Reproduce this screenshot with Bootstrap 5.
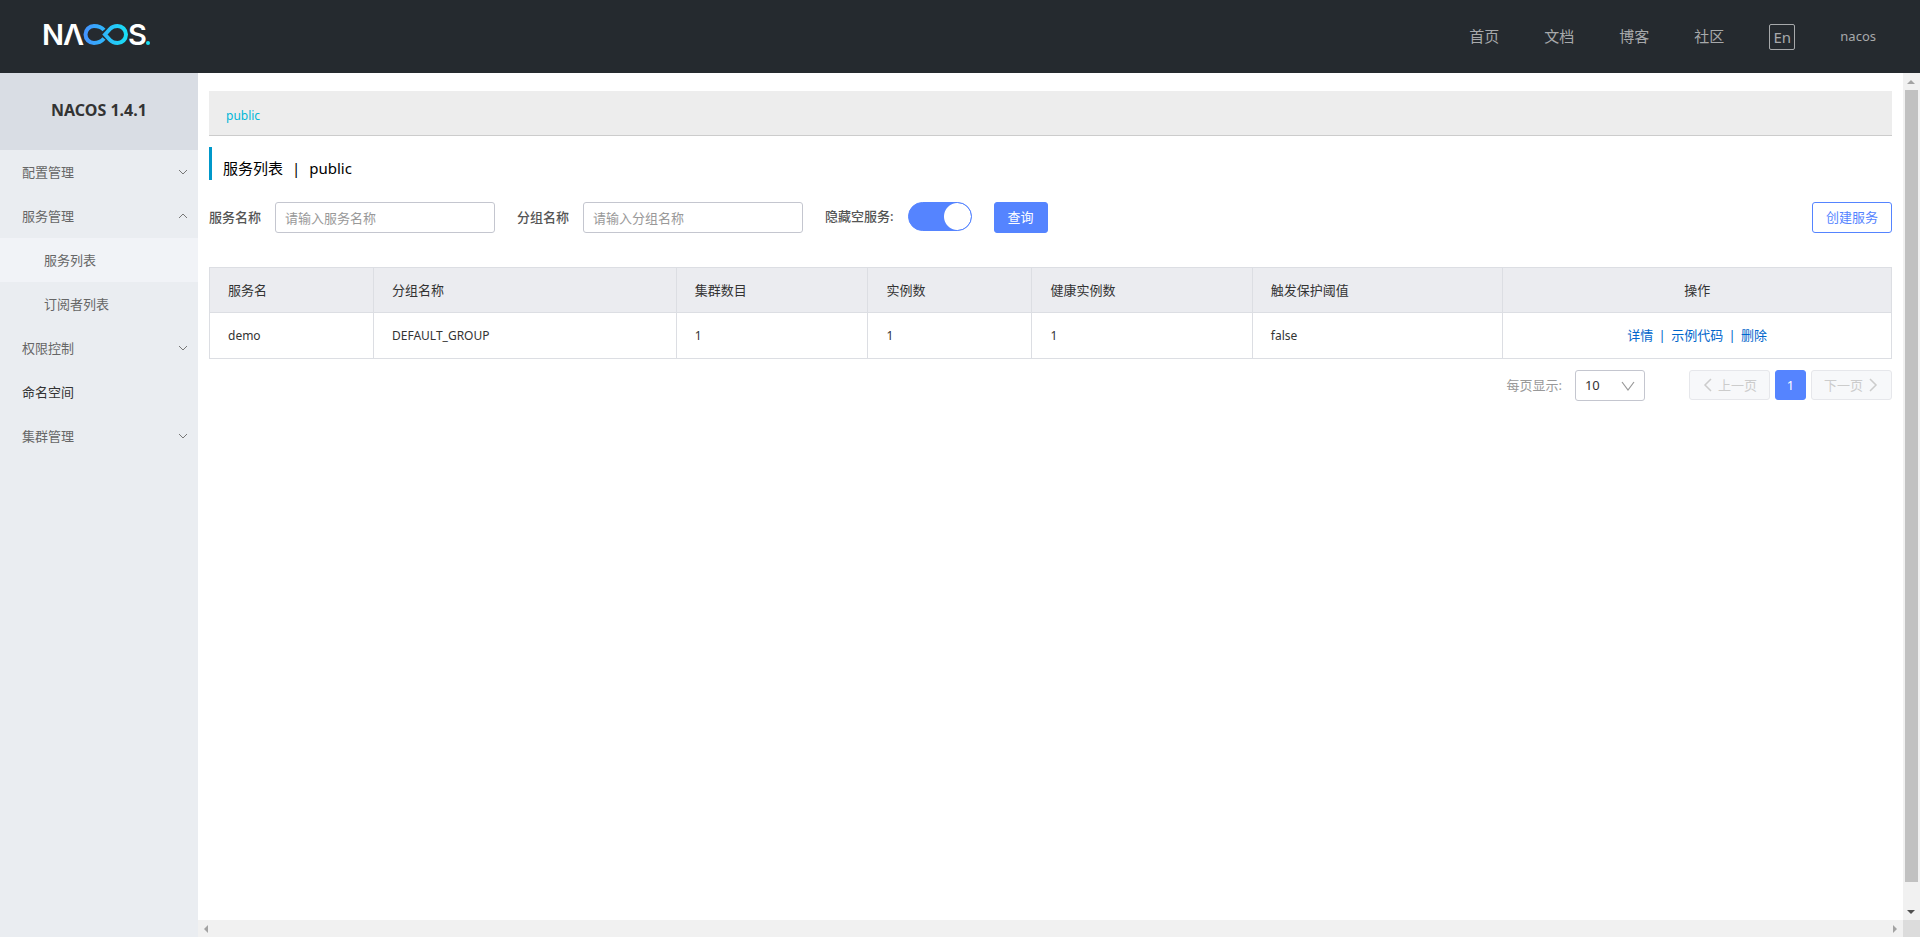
<!DOCTYPE html>
<html lang="zh-CN">
<head>
<meta charset="utf-8">
<meta name="viewport" content="width=device-width, initial-scale=1">
<title>Nacos</title>
<link href="https://cdn.jsdelivr.net/npm/bootstrap@5.3.0/dist/css/bootstrap.min.css" rel="stylesheet">
<style>
body{font-family:"Noto Sans","Noto Sans CJK SC",sans-serif;font-size:13px;line-height:20px;color:#333;background:#fff}
a{text-decoration:none}
.topbar{height:73px;background:#252a2f;padding:0 44px 0 40px}
.topnav{gap:45px;font-size:15px}
.topnav a{color:#a7a9ab;padding-bottom:2px}
.topnav .user-link{font-size:13px}
.lang-btn{width:26px;height:26px;padding:0;border:1px solid #a7a9ab;border-radius:2px;background:none;color:#a7a9ab;font-size:15px;line-height:22px}
.sidebar{width:198px;background:#eaedf1}
.side-title{height:77px;background:#d9dde4;font-size:16px;font-weight:700;margin:0;padding-bottom:2px}
.side-menu a{height:44px;padding:0 10px 0 22px;color:#666}
.side-menu .sub-link{padding-left:44px}
.side-menu .active{background:#f1f3f7}
.side-menu .plain-link{color:#333}
.content-pane{padding:18px 11px}
.ns-bar{height:45px;background:#ededed;border-bottom:1px solid #ccc;padding:5px 17px 0}
.ns-bar a{color:#00b7d8;font-size:12px}
.page-title{margin:11px 0 22px;height:33px;padding:8px 0 0 11px;border-left:3px solid #0098ca;font-size:15px;font-weight:400;color:#000}
.title-bar{padding:0 9px}
.query-form{gap:22px}
.query-form label{font-weight:500;color:#555;margin-right:14px;padding-bottom:2px}
.query-form .form-control{width:220px;height:31px;padding:0 9px;border:1px solid #c4c6cf;border-radius:3px;font-size:13px}
.query-form .form-control::placeholder{color:#999}
.form-switch .form-check-input{width:64px;height:29px;margin:0;border:1px solid #5584ff;background-color:#5584ff;background-image:radial-gradient(circle at center,#fff 13px,transparent 14px);background-size:27px 27px;background-position:right center}
.btn-nc{height:31px;padding:0 13px 2px;font-size:13px;border-radius:3px;line-height:20px}
.btn-main{background:#5584ff;border-color:#5584ff;color:#fff}
.btn-line{background:#fff;border-color:#5584ff;color:#5584ff}
.svc-table{margin:34px 0 11px;table-layout:fixed;border-color:#dcdee3;--bs-table-color:#333}
.svc-table th,.svc-table td{height:46px;padding:0 18px;vertical-align:middle;font-weight:400;color:#333}
.svc-table thead th{background:#ebecf0;height:45px}
.svc-table td{font-size:12px}
.svc-table .ops-cell{font-size:13px;color:#06c;padding-bottom:2px}
.svc-table .ops-cell a{color:#06c}
.ops-bar{padding:0 2px}
.size-label{color:#999;margin-right:13px;padding-bottom:2px}
.size-select{width:70px;height:31px;padding:0 9px;border:1px solid #c4c6cf;border-radius:3px;font-size:13px;color:#333;background-size:14px 14px;background-position:right 9px center;background-image:url("data:image/svg+xml,%3csvg xmlns='http://www.w3.org/2000/svg' viewBox='0 0 14 14'%3e%3cpath d='M1 3l6 8 6-8' fill='none' stroke='%23999' stroke-width='1.2'/%3e%3c/svg%3e")}
.pager{gap:5px;margin-left:44px}
.pager .btn{height:30px;padding:0 12px;font-size:13px;border-radius:3px;line-height:20px}
.pager .btn:disabled{background:#f7f8fa;border-color:#e6e7eb;color:#ccc;opacity:1}
.pager .btn-main{width:31px;padding:0}
.v-rail{width:17px;background:#f1f1f1;padding:0 2px}
.v-thumb{background:#c1c1c1;margin-bottom:21px}
.rail-tip{height:17px}
.h-rail{height:17px;background:#f1f1f1}
.rail-corner{width:17px;background:#dcdcdc}
</style>
</head>
<body class="vh-100 d-flex flex-column overflow-hidden">
<header class="topbar d-flex align-items-center justify-content-between flex-shrink-0">
  <a href="#" aria-label="NACOS">
    <svg class="d-block" width="112" height="41" viewBox="-4 0 112 41">
      <defs><linearGradient id="loop" gradientUnits="userSpaceOnUse" x1="39" x2="84" y1="0" y2="0"><stop offset="0" stop-color="#4590ff"/><stop offset="1" stop-color="#17e0f5"/></linearGradient></defs>
      <g fill="#fff" font-family="Inter" font-size="29" font-weight="600"><text x="-2" y="29">N</text><text x="19" y="29">Λ</text><text x="84" y="29">S</text></g>
      <g fill="none" stroke="url(#loop)" stroke-width="4"><path d="M60 14C57 10.500 54 10 50 10A8.500 8.500 0 1 0 50 27C54 27 57 26 60 22.500"/><path d="M61 18.500L66 13C68 10.800 70.500 10 73.500 10A8.500 8.500 0 1 1 73.500 27C70.500 27 68 26.200 66 24Z"/></g>
      <circle cx="104" cy="27" r="2" fill="#17e0f5"/>
    </svg>
  </a>
  <nav class="topnav d-flex align-items-center">
    <a href="#">首页</a><a href="#">文档</a><a href="#">博客</a><a href="#">社区</a>
    <button type="button" class="lang-btn">En</button>
    <a href="#" class="user-link">nacos</a>
  </nav>
</header>
<div class="d-flex flex-grow-1">
  <aside class="sidebar flex-shrink-0">
    <h1 class="side-title d-flex align-items-center justify-content-center">NACOS 1.4.1</h1>
    <nav class="side-menu d-flex flex-column">
      <a href="#" class="d-flex align-items-center justify-content-between">配置管理<svg width="10" height="8" fill="none" stroke="#777"><path d="M1 2l4 4 4-4"/></svg></a>
      <a href="#" class="d-flex align-items-center justify-content-between">服务管理<svg width="10" height="8" fill="none" stroke="#777"><path d="M1 6l4-4 4 4"/></svg></a>
      <a href="#" class="sub-link active d-flex align-items-center">服务列表</a>
      <a href="#" class="sub-link d-flex align-items-center">订阅者列表</a>
      <a href="#" class="d-flex align-items-center justify-content-between">权限控制<svg width="10" height="8" fill="none" stroke="#777"><path d="M1 2l4 4 4-4"/></svg></a>
      <a href="#" class="plain-link d-flex align-items-center">命名空间</a>
      <a href="#" class="d-flex align-items-center justify-content-between">集群管理<svg width="10" height="8" fill="none" stroke="#777"><path d="M1 2l4 4 4-4"/></svg></a>
    </nav>
  </aside>
  <div class="d-flex flex-column flex-grow-1">
    <div class="d-flex flex-grow-1">
      <main class="content-pane flex-grow-1">
        <div class="ns-bar d-flex align-items-center"><a href="#">public</a></div>
        <h2 class="page-title d-flex align-items-center"><span>服务列表</span><span class="title-bar">|</span><span>public</span></h2>
        <form class="query-form d-flex align-items-start">
          <div class="d-flex align-items-center"><label for="svc">服务名称</label><input id="svc" type="text" class="form-control" placeholder="请输入服务名称"></div>
          <div class="d-flex align-items-center"><label for="grp">分组名称</label><input id="grp" type="text" class="form-control" placeholder="请输入分组名称"></div>
          <div class="form-switch d-flex align-items-center p-0"><label for="hide">隐藏空服务:</label><input id="hide" type="checkbox" role="switch" class="form-check-input" checked></div>
          <button type="button" class="btn btn-nc btn-main">查询</button>
          <button type="button" class="btn btn-nc btn-line ms-auto">创建服务</button>
        </form>
        <table class="svc-table table table-bordered">
          <colgroup><col style="width:9.75%"><col style="width:18%"><col style="width:11.4%"><col style="width:9.75%"><col style="width:13.1%"><col style="width:14.9%"><col></colgroup>
          <thead><tr><th>服务名</th><th>分组名称</th><th>集群数目</th><th>实例数</th><th>健康实例数</th><th>触发保护阈值</th><th class="text-center">操作</th></tr></thead>
          <tbody><tr><td>demo</td><td>DEFAULT_GROUP</td><td>1</td><td>1</td><td>1</td><td>false</td><td class="ops-cell text-center"><a href="#">详情</a><span class="ops-bar"> | </span><a href="#">示例代码</a><span class="ops-bar"> | </span><a href="#">删除</a></td></tr></tbody>
        </table>
        <div class="d-flex align-items-start justify-content-end">
          <div class="d-flex align-items-center"><label class="size-label" for="size">每页显示:</label><select id="size" class="form-select size-select"><option>10</option></select></div>
          <nav class="pager d-flex" aria-label="分页">
            <button type="button" class="btn d-flex align-items-center gap-1" disabled><svg width="12" height="14" fill="none" stroke="currentColor" stroke-width="1.500"><path d="M9 1L3 7l6 6"/></svg>上一页</button>
            <button type="button" class="btn btn-main">1</button>
            <button type="button" class="btn d-flex align-items-center gap-1" disabled>下一页<svg width="12" height="14" fill="none" stroke="currentColor" stroke-width="1.500"><path d="M3 1l6 6-6 6"/></svg></button>
          </nav>
        </div>
      </main>
      <div class="v-rail d-flex flex-column flex-shrink-0" aria-hidden="true">
        <div class="rail-tip d-flex align-items-center justify-content-center"><svg width="8" height="4"><path d="M0 4l4-4 4 4z" fill="#a3a3a3"/></svg></div>
        <div class="v-thumb flex-grow-1"></div>
        <div class="rail-tip d-flex align-items-center justify-content-center"><svg width="8" height="4"><path d="M0 0l4 4 4-4z" fill="#505050"/></svg></div>
      </div>
    </div>
    <div class="h-rail d-flex flex-shrink-0" aria-hidden="true">
      <div class="flex-grow-1 d-flex align-items-center justify-content-between px-1"><svg width="8" height="8"><path d="M6 0L2 4l4 4z" fill="#a3a3a3"/></svg><svg width="8" height="8"><path d="M2 0l4 4-4 4z" fill="#a3a3a3"/></svg></div>
      <div class="rail-corner"></div>
    </div>
  </div>
</div>
<script src="https://cdn.jsdelivr.net/npm/bootstrap@5.3.0/dist/js/bootstrap.bundle.min.js"></script>
</body>
</html>
